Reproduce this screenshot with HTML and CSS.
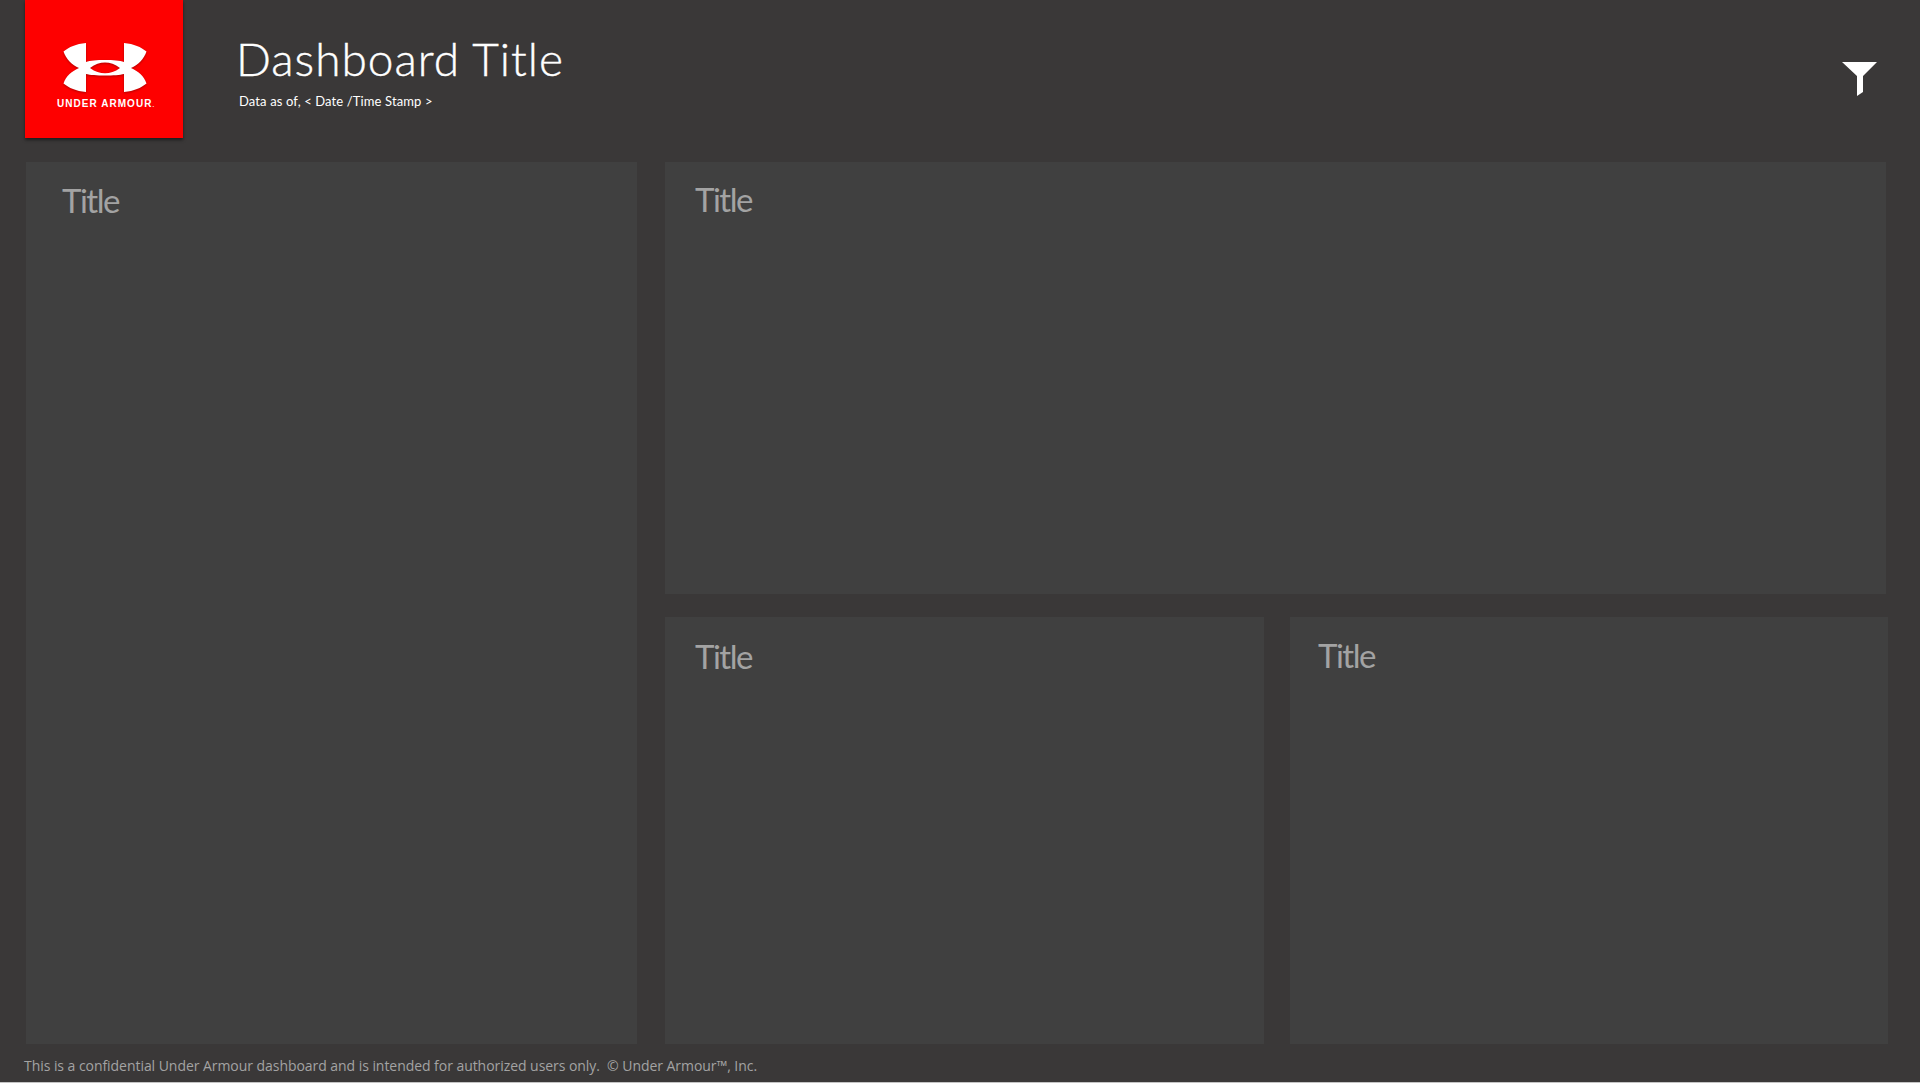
FILE: index.html
```html
<!DOCTYPE html>
<html lang="en">
<head>
    <meta charset="UTF-8">
    <meta name="viewport" content="width=device-width, initial-scale=1.0">
    <title>Dashboard Title</title>
    <link rel="stylesheet" href="styles.css">
</head>
<body>
<header class="header">
    <div class="logo">
        <svg class="logo-mark" viewBox="63 42 84 51" width="84" height="51">
            <path fill="#fff" fill-rule="evenodd" d="M86 43C76 44 69 47 63.500 51.500C66 59 72 65 79 68C72 71 66 76 63.500 83.500C69 88 76 91 86 92L86 74C90 75 97 75.500 105 75.500C113 75.500 120 75 124 74L124 92C134 91 141 88 146.500 83.500C144 76 138 71 131 68C138 65 144 59 146.500 51.500C141 47 134 44 124 43L124 62C120 60.500 113 60 105 60C97 60 90 60.500 86 62ZM90 68C95 64 100 62.500 105 62.500C110 62.500 115 64 120 68C115 72 110 73.200 105 73.200C100 73.200 95 72 90 68Z"/>
        </svg>
        <span class="logo-text">UNDER ARMOUR<small>.</small></span>
    </div>
    <div class="heading">
        <h1>Dashboard Title</h1>
        <p>Data as of, &lt; Date /Time Stamp &gt;</p>
    </div>
    <svg class="filter" viewBox="0 0 35 34" width="35" height="34">
        <polygon fill="#fff" points="0,0 35,0 21,14 21,30 15,34 15,14"/>
    </svg>
</header>
<main class="grid">
    <section class="panel panel-left"><h2>Title</h2></section>
    <div class="right">
        <section class="panel panel-top"><h2>Title</h2></section>
        <div class="bottom">
            <section class="panel"><h2>Title</h2></section>
            <section class="panel panel-last"><h2>Title</h2></section>
        </div>
    </div>
</main>
<footer class="footer">This is a confidential Under Armour dashboard and is intended for authorized users only.&nbsp; © Under Armour™, Inc.</footer>
</body>
</html>
```

FILE: styles.css
```css
html, body {
    height: 100%;
}

body {
    margin: 0;
    box-sizing: border-box;
    background-color: #3a3838;
    border-bottom: 1px solid #c4c4c4;
    font-family: Lato, "Open Sans", sans-serif;
    overflow: hidden;
}

.header {
    display: flex;
    height: 162px;
    padding: 0 43px 0 25px;
    box-sizing: border-box;
}

.logo {
    display: flex;
    flex-direction: column;
    align-items: center;
    width: 158px;
    height: 138px;
    padding-top: 42px;
    box-sizing: border-box;
    background-color: #fe0000;
    box-shadow: 0 2px 3px rgba(0, 0, 0, 0.5);
}

.logo-mark {
    display: block;
    margin-left: 2px;
    filter: drop-shadow(0 1px 1px rgba(0, 0, 0, 0.3));
}

.logo-text {
    margin: 5px 0 0 3px;
    color: #fff;
    font-family: "Liberation Sans", sans-serif;
    font-size: 10px;
    font-weight: bold;
    letter-spacing: 1.05px;
    line-height: 12px;
    white-space: nowrap;
}

.logo-text small {
    font-size: 6px;
    letter-spacing: 0;
}

.heading {
    margin-left: 54px;
    color: #fff;
}

h1 {
    margin: 33px 0 0 -1px;
    font-size: 46px;
    font-weight: 300;
    line-height: 52px;
    letter-spacing: 1px;
    -webkit-text-stroke: 0.4px #fff;
}

.heading p {
    margin: 8px 0 0 2px;
    font-size: 13px;
    line-height: 16px;
    letter-spacing: 0.12px;
}

.filter {
    margin: 62px 0 0 auto;
}

.grid {
    display: grid;
    grid-template-columns: 611px 1fr;
    column-gap: 28px;
    height: 882px;
    padding: 0 32px 0 26px;
}

.right {
    display: grid;
    grid-template-rows: 432px 1fr;
    row-gap: 23px;
}

.bottom {
    display: grid;
    grid-template-columns: 599px 1fr;
    column-gap: 26px;
}

.panel {
    background-color: #404040;
}

.panel-top {
    margin-right: 2px;
}

h2 {
    margin: 19px 0 0 30px;
    color: #a3a3a3;
    font-size: 33px;
    font-weight: 400;
    line-height: 40px;
    letter-spacing: -1.5px;
}

.panel-top h2 {
    margin-top: 17px;
}

.panel-left h2 {
    margin-top: 18px;
    margin-left: 36px;
}

.panel-last h2 {
    margin-top: 18px;
    margin-left: 28px;
}

.footer {
    padding: 13px 0 0 24px;
    color: #a3a3a3;
    font-family: "Open Sans", sans-serif;
    font-size: 14px;
    line-height: 18px;
    letter-spacing: -0.05px;
    white-space: nowrap;
}
```
